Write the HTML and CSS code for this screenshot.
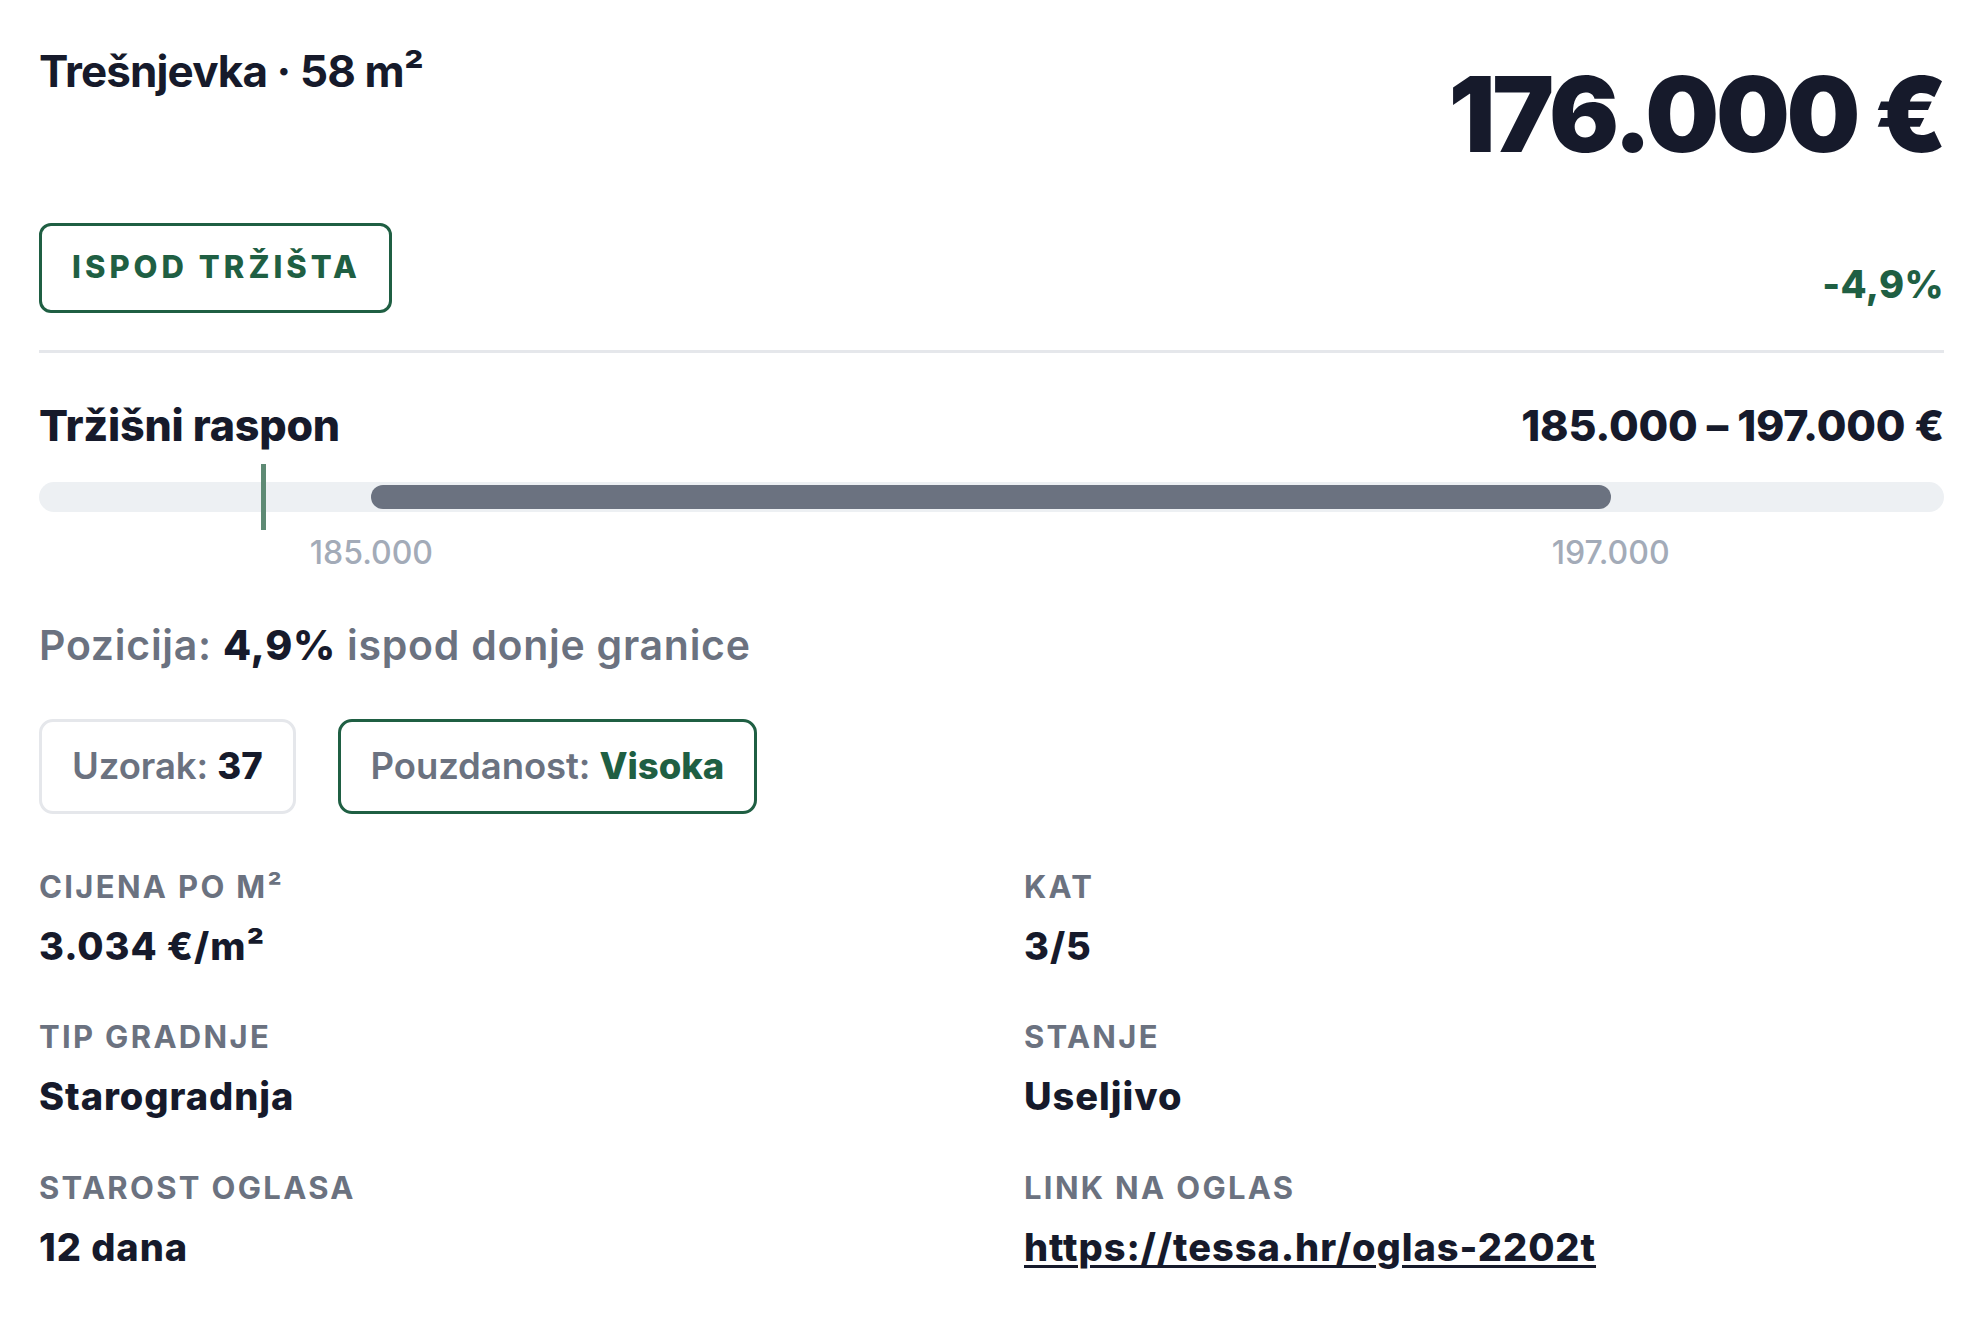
FILE: index.html
```html
<!DOCTYPE html>
<html lang="hr">
<head>
<meta charset="utf-8">
<title>Trešnjevka · 58 m²</title>
<link rel="stylesheet" href="styles.css">
</head>
<body>
<main class="card">
  <header class="head">
    <div class="head-left">
      <h1 class="title">Trešnjevka · 58 m²</h1>
      <div class="badge">ISPOD TRŽIŠTA</div>
    </div>
    <div class="head-right">
      <div class="price">176.000 €</div>
      <div class="delta">-4,9%</div>
    </div>
  </header>

  <hr class="divider">

  <section class="market">
    <div class="market-row">
      <h2 class="market-title">Tržišni raspon</h2>
      <div class="market-range">185.000 – 197.000 €</div>
    </div>
    <div class="scale">
      <div class="track">
        <div class="fill" style="left: 17.45%; width: 65.05%;"></div>
      </div>
      <div class="marker" style="left: 11.78%;"></div>
    </div>
    <div class="ticks">
      <span class="tick" style="left: 17.45%;">185.000</span>
      <span class="tick" style="left: 82.5%;">197.000</span>
    </div>
    <p class="position">Pozicija: <strong>4,9%</strong> ispod donje granice</p>
    <div class="chips">
      <div class="chip">Uzorak: <strong>37</strong></div>
      <div class="chip chip-green">Pouzdanost: <strong>Visoka</strong></div>
    </div>
  </section>

  <dl class="details">
    <div class="item">
      <dt>Cijena po m²</dt>
      <dd>3.034 €/m²</dd>
    </div>
    <div class="item">
      <dt>Kat</dt>
      <dd>3/5</dd>
    </div>
    <div class="item">
      <dt>Tip gradnje</dt>
      <dd>Starogradnja</dd>
    </div>
    <div class="item">
      <dt>Stanje</dt>
      <dd>Useljivo</dd>
    </div>
    <div class="item">
      <dt>Starost oglasa</dt>
      <dd>12 dana</dd>
    </div>
    <div class="item">
      <dt>Link na oglas</dt>
      <dd><a class="link" href="#">https://tessa.hr/oglas-2202t</a></dd>
    </div>
  </dl>
</main>
</body>
</html>
```

FILE: styles.css
```css
* { box-sizing: border-box; }

html, body {
  margin: 0;
  padding: 0;
  background: #ffffff;
}

body {
  font-family: Inter, "Noto Sans", "Liberation Sans", sans-serif;
  color: #161a2b;
}

.card {
  padding: 44.6px 43px 40px 39px;
}

/* Header */
.head {
  display: flex;
  justify-content: space-between;
  align-items: flex-start;
}

.head-left {
  display: flex;
  flex-direction: column;
  align-items: flex-start;
}

.title {
  margin: 0;
  font-size: 44px;
  line-height: 1.2;
  font-weight: 700;
  letter-spacing: -0.02em;
}

.badge {
  margin-top: 125.6px;
  height: 90px;
  padding: 22.7px 28px 0 30px;
  border: 3px solid #1f5f43;
  border-radius: 12px;
  color: #1f5f43;
  font-size: 31px;
  line-height: 36px;
  font-weight: 800;
  letter-spacing: 0.13em;
}

.head-right {
  display: flex;
  flex-direction: column;
  align-items: flex-end;
}

.price {
  margin-top: 17.4px;
  font-size: 104px;
  line-height: 1;
  font-weight: 900;
  letter-spacing: -0.032em;
}

.delta {
  margin-top: 95.7px;
  font-size: 38px;
  line-height: 1.2;
  font-weight: 800;
  color: #1f5f43;
  letter-spacing: 0.01em;
}

.divider {
  margin: 37px 0 0 0;
  border: 0;
  height: 3px;
  background: #e5e7eb;
}

/* Market range */
.market-row {
  margin-top: 47.3px;
  display: flex;
  justify-content: space-between;
  align-items: baseline;
}

.market-title,
.market-range {
  margin: 0;
  font-size: 43px;
  line-height: 1.2;
  font-weight: 800;
  letter-spacing: -0.005em;
}

.scale {
  position: relative;
  margin-top: 12.1px;
  height: 66px;
  display: flex;
  align-items: center;
}

.track {
  position: relative;
  width: 100%;
  height: 30px;
  border-radius: 15px;
  background: #edf0f3;
}

.fill {
  position: absolute;
  top: 3px;
  bottom: 3px;
  border-radius: 12px;
  background: #6b7280;
}

.marker {
  position: absolute;
  top: 0;
  width: 5px;
  height: 66px;
  margin-left: -2.5px;
  background: #5e8a74;
}

.ticks {
  position: relative;
  margin-top: 4.2px;
  height: 38.4px;
}

.tick {
  position: absolute;
  top: 0;
  transform: translateX(-50%);
  font-size: 32px;
  line-height: 1.2;
  font-weight: 500;
  color: #a3abb8;
}

.position {
  margin: 48.9px 0 0 0;
  font-size: 41px;
  line-height: 1.2;
  font-weight: 600;
  color: #6b7280;
  letter-spacing: 0.018em;
}

.position strong {
  font-weight: 800;
  color: #161a2b;
}

.chips {
  margin-top: 48.3px;
  display: flex;
  gap: 42px;
}

.chip {
  height: 95px;
  padding: 22.8px 30px 0 30px;
  border: 3px solid #e5e7eb;
  border-radius: 14px;
  font-size: 36.5px;
  line-height: 1.2;
  font-weight: 600;
  color: #6b7280;
  letter-spacing: -0.002em;
}

.chip strong {
  font-weight: 800;
  color: #161a2b;
}

.chip-green {
  border-color: #1f5f43;
}

.chip-green strong {
  color: #1f5f43;
}

/* Details grid */
.details {
  margin: 54.1px 0 0 0;
  display: grid;
  grid-template-columns: 1fr 1fr;
  column-gap: 65px;
  row-gap: 48.7px;
}

.item dt {
  margin: 0;
  font-size: 31px;
  line-height: 1.2;
  font-weight: 700;
  color: #6b7280;
  text-transform: uppercase;
  letter-spacing: 0.075em;
}

.item dd {
  margin: 18.8px 0 0 0;
  font-size: 38px;
  line-height: 1.2;
  font-weight: 800;
  color: #161a2b;
  letter-spacing: 0.025em;
}

.link {
  color: #161a2b;
  text-decoration: underline;
  text-decoration-thickness: 3px;
  text-underline-offset: 4px;
}
```
